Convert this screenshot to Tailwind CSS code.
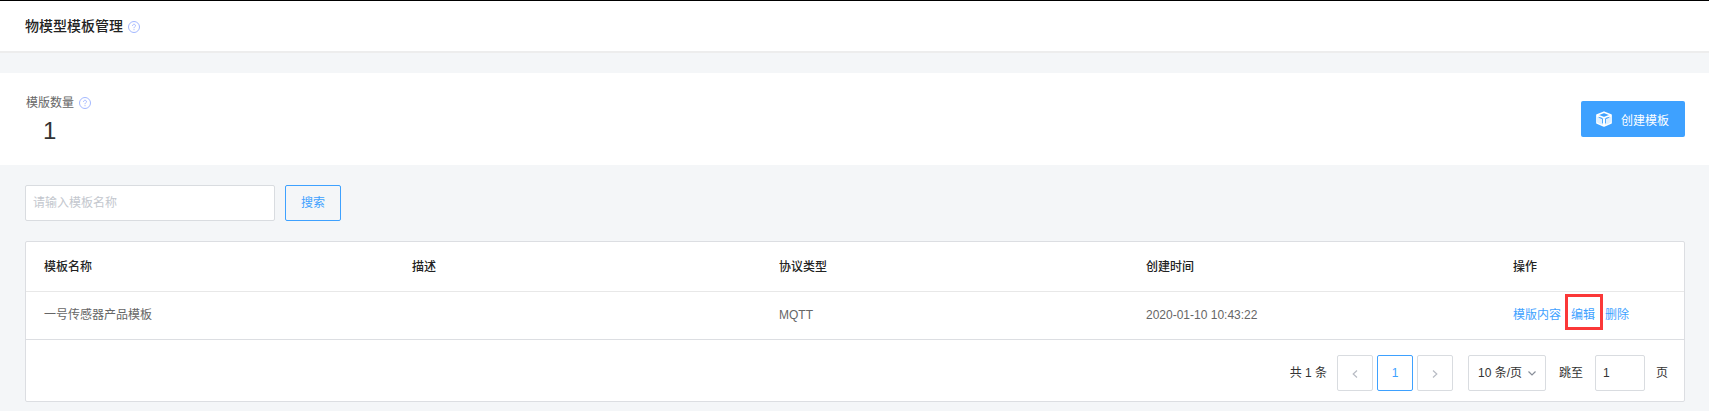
<!DOCTYPE html>
<html lang="zh-CN">
<head>
<meta charset="utf-8">
<title>物模型模板管理</title>
<script src="https://cdn.jsdelivr.net/npm/@tailwindcss/browser@4"></script>
</head>
<body class="h-[411px] overflow-hidden bg-[#f4f6f8] font-['Liberation_Sans','Noto_Sans_CJK_SC',sans-serif] text-xs text-[#333]">
<header class="flex h-[53px] items-center gap-[5px] border-t border-b-2 border-t-black border-b-[#ededed] bg-white pl-[25px]">
  <h1 class="text-sm font-medium leading-5 text-[#222]">物模型模板管理</h1>
  <svg class="size-3 translate-y-px" viewBox="0 0 12 12" fill="none" stroke="#a3b8ff"><circle cx="6" cy="6" r="5.5"/><path d="M4.5 4.8C4.5 2.8 7.5 2.8 7.5 4.7C7.5 5.8 6 5.8 6 7.2M6 8.2V9.2"/></svg>
</header>
<section class="mt-5 flex h-[92px] items-center justify-between bg-white px-6 pl-[26px]">
  <div class="pt-1">
    <div class="flex items-center gap-1 leading-4 text-[#666]"><span>模版数量</span>
      <svg class="size-3 translate-x-px" viewBox="0 0 12 12" fill="none" stroke="#a3b8ff"><circle cx="6" cy="6" r="5.5"/><path d="M4.5 4.8C4.5 2.8 7.5 2.8 7.5 4.7C7.5 5.8 6 5.8 6 7.2M6 8.2V9.2"/></svg>
    </div>
    <div class="pt-1 pl-[17px] text-2xl leading-8">1</div>
  </div>
  <button class="flex h-9 w-[104px] items-center gap-[9px] rounded-xs bg-[#3ea1ff] pl-[15px] text-white">
    <svg class="size-4" viewBox="0 0 16 16"><path fill="white" fill-opacity="0.85" d="M2 5.5L8 8L14 5.5V11.8L8 14.4L2 11.8Z"/><path fill="none" stroke="white" stroke-width="1.7" stroke-linejoin="round" d="M8 1.2L15 4V12L8 15L1 12V4ZM1 4L8 6.8L15 4M8 6.8V15"/><path fill="none" stroke="#3ea1ff" stroke-width="0.9" d="M2.6 6.2L6.5 7.9V12.4M13.4 6.2L9.5 7.9V12.4"/></svg>
    <span class="pt-[3px]">创建模板</span>
  </button>
</section>
<main class="px-[25px] pr-6 pt-5">
  <div class="flex gap-2.5">
    <input class="h-9 w-[250px] rounded-xs border border-[#d9dce0] bg-white px-[7px] placeholder:text-[#c3c7ce]" placeholder="请输入模板名称">
    <button class="h-9 w-14 rounded-xs border border-[#3ea1ff] text-[#3ea1ff]">搜索</button>
  </div>
  <div class="mt-5 h-[161px] rounded-xs border border-[#dcdee2] bg-white">
    <div class="grid h-[50px] grid-cols-[368px_367px_367px_367px_1fr] items-center border-b border-[#e8e8e8] pl-[18px] font-medium text-[#222]">
      <div>模板名称</div><div>描述</div><div>协议类型</div><div>创建时间</div><div>操作</div>
    </div>
    <div class="grid h-12 grid-cols-[368px_367px_367px_367px_1fr] items-center border-b border-[#dcdee2] pb-0.5 pl-[18px] text-[#666]">
      <div>一号传感器产品模板</div><div></div><div>MQTT</div><div>2020-01-10 10:43:22</div>
      <div class="flex items-center gap-2.5 text-[#3ea1ff]"><a>模版内容</a><a class="relative">编辑<span class="absolute -left-1.5 top-1/2 h-9 w-[38px] -translate-y-[21px] border-3 border-[#fb3838]"></span></a><a>删除</a></div>
    </div>
    <div class="flex h-[61px] items-center justify-end pr-4 pt-[5px]">
      <span>共 1 条</span>
      <button class="ml-2.5 flex size-9 items-center justify-center rounded-xs border border-[#d9dce0]"><svg class="h-2 w-1.5 translate-y-px" viewBox="0 0 6 8" fill="none" stroke="#b8bcc4" stroke-width="1.2"><path d="M5 0.5L1.2 4L5 7.5"/></svg></button>
      <button class="ml-1 size-9 rounded-xs border border-[#3ea1ff] text-[#3ea1ff]">1</button>
      <button class="ml-1 flex size-9 items-center justify-center rounded-xs border border-[#d9dce0]"><svg class="h-2 w-1.5 translate-y-px" viewBox="0 0 6 8" fill="none" stroke="#b8bcc4" stroke-width="1.2"><path d="M1 0.5L4.8 4L1 7.5"/></svg></button>
      <button class="ml-[15px] flex h-9 w-[78px] items-center gap-[6px] rounded-xs border border-[#d9dce0] pl-[9px]">10 条/页<svg class="h-[5px] w-2" viewBox="0 0 8 5" fill="none" stroke="#888e99" stroke-width="1.2"><path d="M0.5 0.5L4 4L7.5 0.5"/></svg></button>
      <span class="ml-[13px]">跳至</span>
      <input class="ml-3 h-9 w-[50px] rounded-xs border border-[#d9dce0] px-[7px]" value="1">
      <span class="ml-[11px]">页</span>
    </div>
  </div>
</main>
</body>
</html>
